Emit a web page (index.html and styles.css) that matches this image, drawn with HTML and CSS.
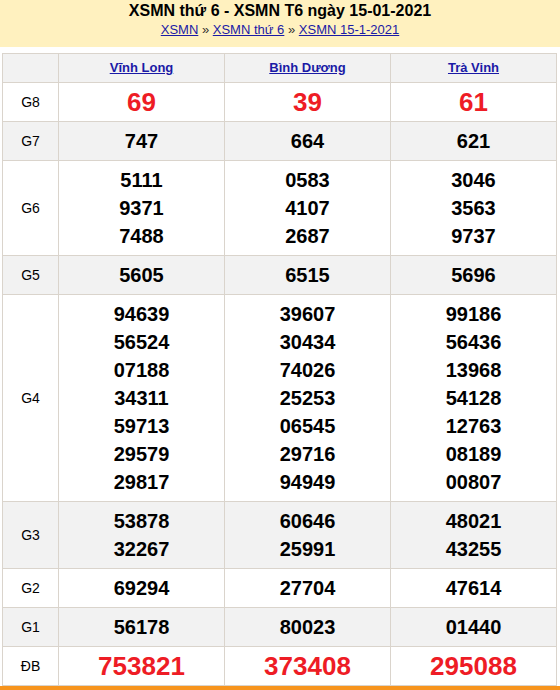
FILE: index.html
```html
<!DOCTYPE html>
<html lang="vi">
<head>
<meta charset="utf-8">
<title>XSMN thứ 6</title>
<link rel="stylesheet" href="styles.css">
</head>
<body>
<div class="page">
  <header class="head">
    <h1 class="title">XSMN thứ 6 - XSMN T6 ngày 15-01-2021</h1>
    <div class="crumbs"><a href="#">XSMN</a> » <a href="#">XSMN thứ 6</a> » <a href="#">XSMN 15-1-2021</a></div>
  </header>
  <div class="wrap">
    <table class="kq">
      <colgroup><col class="c-lbl"><col class="c-n"><col class="c-n"><col class="c-n"></colgroup>
      <tr class="hd"><th></th><th><a href="#">Vĩnh Long</a></th><th><a href="#">Bình Dương</a></th><th><a href="#">Trà Vinh</a></th></tr>
      <tr><td class="lbl">G8</td><td class="big">69</td><td class="big">39</td><td class="big">61</td></tr>
      <tr class="alt"><td class="lbl">G7</td><td>747</td><td>664</td><td>621</td></tr>
      <tr><td class="lbl">G6</td><td>5111<br>9371<br>7488</td><td>0583<br>4107<br>2687</td><td>3046<br>3563<br>9737</td></tr>
      <tr class="alt"><td class="lbl">G5</td><td>5605</td><td>6515</td><td>5696</td></tr>
      <tr><td class="lbl">G4</td><td>94639<br>56524<br>07188<br>34311<br>59713<br>29579<br>29817</td><td>39607<br>30434<br>74026<br>25253<br>06545<br>29716<br>94949</td><td>99186<br>56436<br>13968<br>54128<br>12763<br>08189<br>00807</td></tr>
      <tr class="alt"><td class="lbl">G3</td><td>53878<br>32267</td><td>60646<br>25991</td><td>48021<br>43255</td></tr>
      <tr><td class="lbl">G2</td><td>69294</td><td>27704</td><td>47614</td></tr>
      <tr class="alt"><td class="lbl">G1</td><td>56178</td><td>80023</td><td>01440</td></tr>
      <tr><td class="lbl">ĐB</td><td class="big">753821</td><td class="big">373408</td><td class="big">295088</td></tr>
    </table>
  </div>
</div>
</body>
</html>
```
FILE: styles.css
```css
html, body {
  margin: 0;
  padding: 0;
  background: #fff;
}
body {
  font-family: "Liberation Sans", Arial, sans-serif;
  color: #000;
}
.page {
  width: 560px;
  height: 690px;
  overflow: hidden;
  display: flex;
  flex-direction: column;
}
.head {
  background: #fff1bf;
  height: 49px;
  box-sizing: border-box;
  padding-top: 2px;
  text-align: center;
}
.title {
  margin: 0;
  font-size: 16px;
  line-height: 18px;
  font-weight: bold;
}
.crumbs {
  margin-top: 1px;
  font-size: 13px;
  line-height: 18px;
  color: #333;
}
.crumbs a {
  color: #1a1aa6;
}
.wrap {
  padding: 6px 0 0 2px;
  border-bottom: 4px solid #f7941d;
  flex: 1;
}
.kq {
  border-collapse: collapse;
  table-layout: fixed;
  width: 555px;
}
.c-lbl { width: 56px; }
.c-n { width: 166px; }
.kq th, .kq td {
  border: 1px solid #dad4cc;
  text-align: center;
  padding: 5px 2px;
}
.kq th {
  background: #f2f2f2;
  font-size: 13px;
  line-height: 18px;
  font-weight: bold;
}
.kq th a {
  color: #1a1aa6;
}
.kq td {
  font-size: 20px;
  line-height: 28px;
  font-weight: bold;
}
.kq tr.alt td {
  background: #f2f2f2;
}
.kq td.lbl {
  font-size: 14px;
  font-weight: normal;
}
.kq td.big {
  color: #ee1c25;
  font-size: 26px;
}
```
